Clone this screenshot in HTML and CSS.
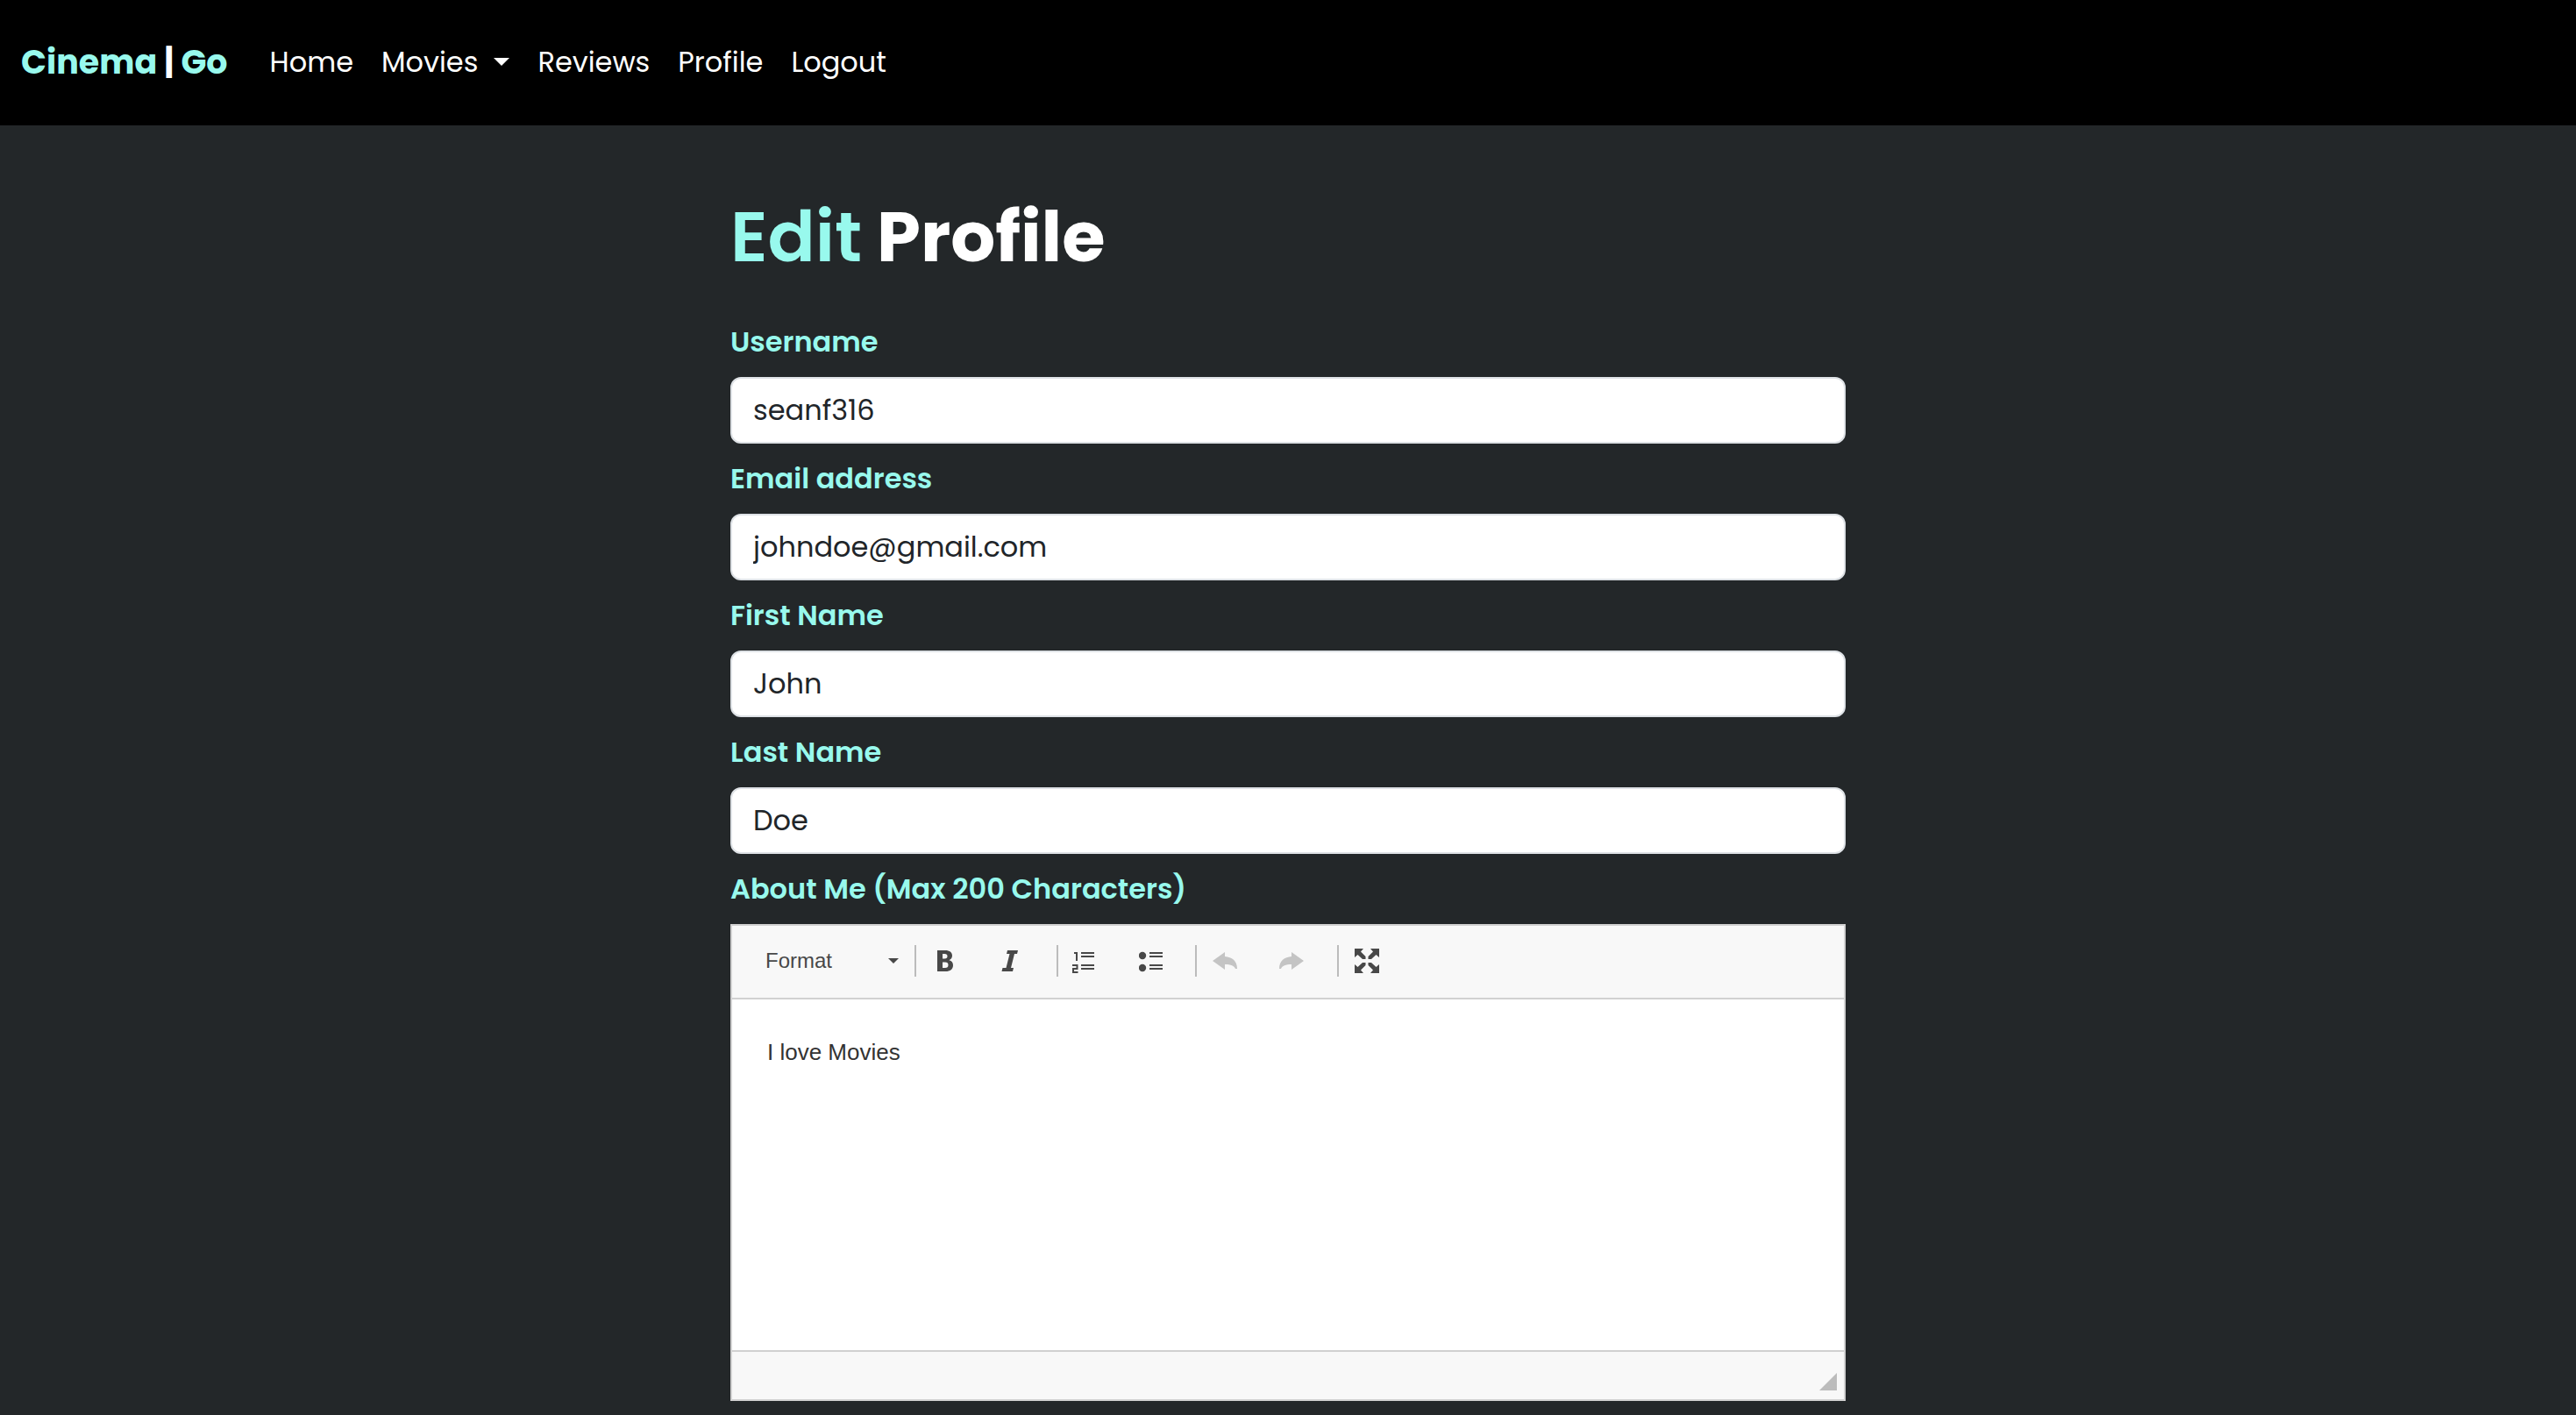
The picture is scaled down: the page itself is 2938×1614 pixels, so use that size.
FILE: index.html
```html
<!DOCTYPE html>
<html lang="en">
<head>
<meta charset="utf-8">
<meta name="viewport" content="width=device-width, initial-scale=1">
<title>Cinema | Go - Edit Profile</title>
<link rel="stylesheet" href="styles.css">
</head>
<body>
<header class="navbar">
  <a class="brand" href="#">Cinema <span class="brand-bar">|</span> Go</a>
  <nav aria-label="Main">
    <ul class="nav-list">
      <li><a class="nav-link" href="#">Home</a></li>
      <li><button class="nav-link nav-toggle" type="button" aria-haspopup="true">Movies<span class="caret"></span></button></li>
      <li><a class="nav-link" href="#">Reviews</a></li>
      <li><a class="nav-link" href="#">Profile</a></li>
      <li><a class="nav-link" href="#">Logout</a></li>
    </ul>
  </nav>
</header>

<main class="container">
  <h1 class="title"><span class="title-accent">Edit</span> Profile</h1>
  <form class="form">
    <div class="field">
      <label for="username">Username</label>
      <input class="control" id="username" type="text" value="seanf316">
    </div>
    <div class="field">
      <label for="email">Email address</label>
      <input class="control" id="email" type="email" value="johndoe@gmail.com">
    </div>
    <div class="field">
      <label for="first-name">First Name</label>
      <input class="control" id="first-name" type="text" value="John">
    </div>
    <div class="field">
      <label for="last-name">Last Name</label>
      <input class="control" id="last-name" type="text" value="Doe">
    </div>
    <div class="field">
      <label for="about">About Me (Max 200 Characters)</label>
      <div class="editor">
        <div class="toolbar" role="toolbar" aria-label="Text formatting">
          <div class="format">
            <select class="format-select" aria-label="Paragraph format"><option>Format</option></select>
            <span class="format-caret"></span>
          </div>
          <div class="group">
            <button class="tool" type="button" aria-label="Bold">
              <svg viewBox="0 0 32 32"><path fill="currentColor" fill-rule="evenodd" d="M8 4h9c5 0 8 2.300 8 6 0 2.500-1.300 4.300-3.500 5.200 3 .7 4.500 2.800 4.500 5.800 0 4.600-3.300 7-8.500 7H8zm6 4v5.500h2.500c2 0 3-1 3-2.800S18.500 8 16.500 8zm0 9.500V24h3c2.300 0 3.500-1.200 3.500-3.300s-1.200-3.200-3.500-3.200z"/></svg>
            </button>
            <button class="tool" type="button" aria-label="Italic">
              <svg viewBox="0 0 32 32"><path fill="currentColor" d="M12 4h12l-1 4h-3l-4 16h3l-1 4H5.500l1-4h4l4-16H11z"/></svg>
            </button>
          </div>
          <div class="group group-lists">
            <button class="tool" type="button" aria-label="Numbered list">
              <svg viewBox="0 0 32 32" fill="none" stroke="currentColor" stroke-width="2"><path d="M2 7h3v9M0 21h5.500v4H1v4h5.500"/><path d="M10 7h15M10 11h15M10 21h15M10 25h15"/></svg>
            </button>
            <button class="tool" type="button" aria-label="Bulleted list">
              <svg viewBox="0 0 32 32"><g fill="currentColor"><circle cx="4" cy="10" r="4.200"/><circle cx="4" cy="24" r="4.200"/></g><path fill="none" stroke="currentColor" stroke-width="2" d="M12 7h15M12 11h15M12 21h15M12 25h15"/></svg>
            </button>
          </div>
          <div class="group">
            <button class="tool" type="button" aria-label="Undo" disabled>
              <svg viewBox="0 0 32 32"><path fill="currentColor" d="M2 16 16 6v5c8 .5 14 5 14 14h-2c-1.500-3.500-5-5-12-5v6z"/></svg>
            </button>
            <button class="tool" type="button" aria-label="Redo" disabled>
              <svg viewBox="0 0 32 32"><path fill="currentColor" d="M30 16 16 6v5c-8 .5-14 5-14 14h2c1.500-3.500 5-5 12-5v6z"/></svg>
            </button>
          </div>
          <div class="group">
            <button class="tool" type="button" aria-label="Maximize">
              <svg viewBox="0 0 32 32"><g fill="currentColor"><path d="M2 2h10L9 5.500l5.500 5.500v3H11L5.500 9 2 12z"/><path d="M30 2H20l3 3.500-5.500 5.500v3H21l5.500-5 3.500 3z"/><path d="M2 30h10l-3-3.500 5.500-5.500v-3H11l-5.500 5L2 20z"/><path d="M30 30H20l3-3.500-5.500-5.500v-3H21l5.500 5 3.500-3z"/></g></svg>
            </button>
          </div>
        </div>
        <textarea class="editor-text" id="about">I love Movies</textarea>
        <div class="editor-foot"><span class="resizer"></span></div>
      </div>
    </div>
  </form>
</main>
</body>
</html>
```
FILE: styles.css
```css
:root {
  --accent: #98f9ed;
  --ink: #212529;
  --line: #d1d1d1;
  --panel: #f8f8f8;
  --tool: #484848;
}

* { box-sizing: border-box; }

body {
  margin: 0;
  background: #232729;
  color: #fff;
  font: 400 32px/48px "Poppins", "Inter", sans-serif;
}

button, input, select, textarea { font: inherit; }

.navbar {
  display: flex;
  align-items: center;
  gap: 32px;
  min-height: 143px;
  padding: 0 24px 2px;
  background: #000;
}

.brand {
  color: var(--accent);
  font-size: 38px;
  font-weight: 700;
  text-decoration: none;
}

.brand-bar { color: #fff; }

.nav-list {
  display: flex;
  margin: 0;
  padding: 0;
  list-style: none;
}

.nav-link {
  display: flex;
  align-items: center;
  padding: 16px;
  border: 0;
  background: none;
  color: #fff;
  text-decoration: none;
}

.nav-toggle { gap: 18px; }

.caret {
  border: 9px solid transparent;
  border-top-color: #fff;
  border-bottom: 0;
}

.container {
  width: 100%;
  max-width: 1320px;
  margin: 0 auto;
  padding: 79px 24px 16px;
}

.title {
  margin: 0 0 48px;
  font-size: 80px;
  line-height: 96px;
  font-weight: 700;
}

.title-accent {
  color: var(--accent);
  font-weight: 600;
}

.form {
  display: grid;
  gap: 16px;
}

.field {
  display: grid;
  gap: 16px;
}

.field label {
  color: var(--accent);
  font-weight: 600;
}

.control {
  width: 100%;
  padding: 12px 24px;
  border: 2px solid #dee2e6;
  border-radius: 12px;
  background: #fff;
  color: var(--ink);
  height: 76px;
}

.editor {
  border: 2px solid var(--line);
  background: #fff;
  font-family: "Liberation Sans", Arial, sans-serif;
}

.toolbar {
  display: flex;
  padding: 22px 12px 24px;
  border-bottom: 2px solid var(--line);
  background: var(--panel);
  color: var(--tool);
}

.format {
  display: flex;
  align-items: center;
  width: 196px;
  padding: 0 18px 0 26px;
}

.format-select {
  flex: 1;
  min-width: 0;
  padding: 0;
  border: 0;
  appearance: none;
  background: none;
  color: inherit;
  font-size: 24px;
  line-height: 36px;
}

.format-caret {
  border: 6px solid transparent;
  border-top-color: var(--tool);
  border-bottom: 0;
}

.group {
  display: flex;
  gap: 12px;
  height: 36px;
  padding-right: 20px;
  border-left: 2px solid #bcbcbc;
}

.group-lists { padding-right: 16px; }

.tool {
  display: flex;
  align-items: center;
  justify-content: center;
  width: 64px;
  padding: 0;
  border: 0;
  background: none;
  color: var(--tool);
}

.tool:disabled { color: #c4c4c4; }

.tool svg {
  width: 32px;
  height: 32px;
}

.editor-text {
  display: block;
  width: 100%;
  height: 400px;
  padding: 40px;
  border: 0;
  resize: none;
  background: #fff;
  color: #333;
  font-size: 26px;
  line-height: 40px;
}

.editor-foot {
  display: flex;
  justify-content: flex-end;
  padding: 24px 8px 10px;
  border-top: 2px solid var(--line);
  background: var(--panel);
}

.resizer {
  border-left: 20px solid transparent;
  border-bottom: 20px solid #bcbcbc;
}
```
